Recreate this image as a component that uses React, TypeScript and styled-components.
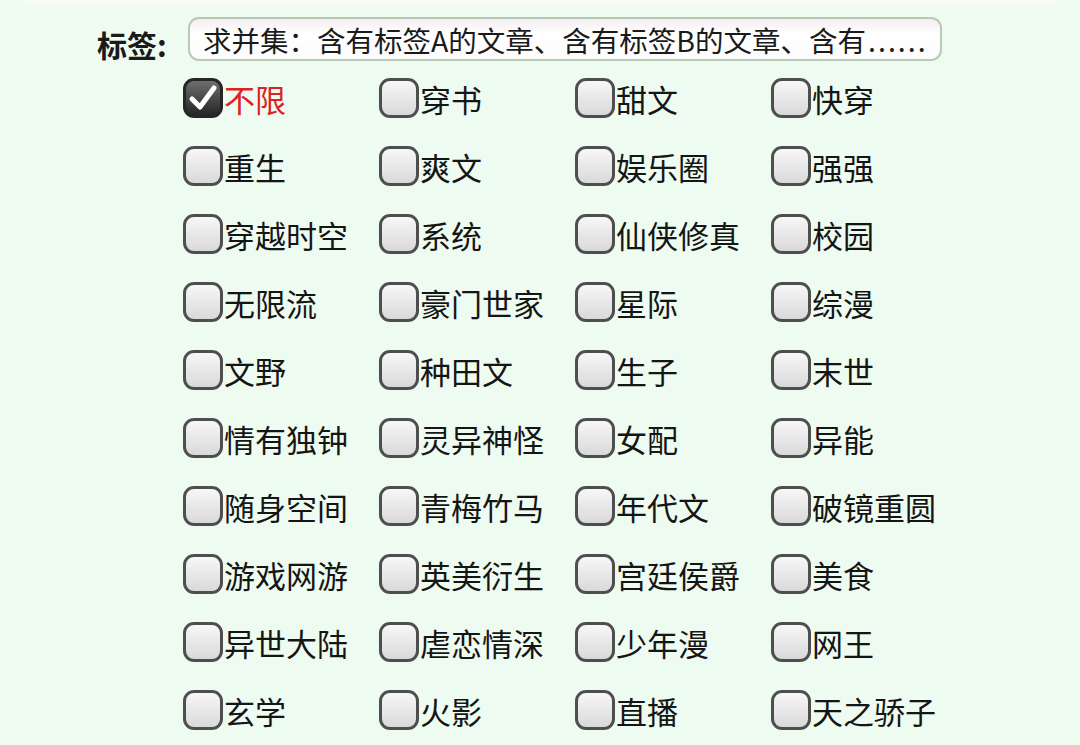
import React from "react";
import styled, { createGlobalStyle } from "styled-components";

const Global = createGlobalStyle`
  html, body { margin: 0; padding: 0; background: #eefbf0; }
  body { font-family: "Noto Sans CJK SC", "Noto Sans", sans-serif; }
`;

const Page = styled.div`
  width: 1080px;
  height: 745px;
  background: #eefbf0;
  overflow: hidden;
`;

const TopStrip = styled.div`
  height: 5px;
  margin: 0 25px;
  background: #f8fbf5;
`;

const Header = styled.div`
  display: flex;
  align-items: center;
  padding-left: 97px;
  margin-top: 12px;
  height: 44px;
`;

const Label = styled.span`
  font-size: 30px;
  font-weight: 700;
  color: #1a1a1a;
  width: 91px;
  line-height: 1;
  padding-top: 10px;
`;

const InputBox = styled.div`
  box-sizing: border-box;
  width: 754px;
  height: 44px;
  border: 2px solid #b9c9b5;
  border-radius: 11px;
  background: linear-gradient(#f4eef2, #ffffff 40%, #fdfcfd);
  display: flex;
  align-items: center;
  padding-left: 13px;
  font-size: 28.5px;
  color: #1a1a1a;
  white-space: nowrap;
  overflow: hidden;
`;

const Dots = styled.span`
  letter-spacing: 2px;
  margin-left: 2px;
`;

const Grid = styled.div`
  display: grid;
  grid-template-columns: repeat(4, 196px);
  grid-auto-rows: 68px;
  padding-left: 183px;
  margin-top: 3px;
`;

const Item = styled.div`
  display: flex;
  align-items: center;
`;

const Box = styled.div<{ $checked?: boolean }>`
  box-sizing: border-box;
  width: 40px;
  height: 40px;
  border-radius: 11px;
  border: 3px solid ${(p) => (p.$checked ? "#262626" : "#4e4e4e")};
  background: ${(p) =>
    p.$checked
      ? "linear-gradient(#6e6e6e, #262626)"
      : "linear-gradient(#f7f7f7, #d9d9d9)"};
  display: flex;
  align-items: center;
  justify-content: center;
  flex-shrink: 0;
`;

const Text = styled.span<{ $red?: boolean }>`
  font-size: 31px;
  line-height: 1;
  color: ${(p) => (p.$red ? "#e02121" : "#151515")};
  margin-left: 1px;
  white-space: nowrap;
`;

const tags = [
  "不限", "穿书", "甜文", "快穿",
  "重生", "爽文", "娱乐圈", "强强",
  "穿越时空", "系统", "仙侠修真", "校园",
  "无限流", "豪门世家", "星际", "综漫",
  "文野", "种田文", "生子", "末世",
  "情有独钟", "灵异神怪", "女配", "异能",
  "随身空间", "青梅竹马", "年代文", "破镜重圆",
  "游戏网游", "英美衍生", "宫廷侯爵", "美食",
  "异世大陆", "虐恋情深", "少年漫", "网王",
  "玄学", "火影", "直播", "天之骄子",
];

const Check = () => (
  <svg width="32" height="32" viewBox="0 0 32 32">
    <path
      d="M5 17 L13 25 L27 6"
      fill="none"
      stroke="#ffffff"
      strokeWidth="5"
      strokeLinecap="round"
      strokeLinejoin="round"
    />
  </svg>
);

export default function App() {
  return (
    <Page>
      <Global />
      <TopStrip />
      <Header>
        <Label>标签:</Label>
        <InputBox>
          求并集：含有标签A的文章、含有标签B的文章、含有<Dots>......</Dots>
        </InputBox>
      </Header>
      <Grid>
        {tags.map((t, i) => (
          <Item key={t}>
            <Box $checked={i === 0}>{i === 0 && <Check />}</Box>
            <Text $red={i === 0}>{t}</Text>
          </Item>
        ))}
      </Grid>
    </Page>
  );
}
